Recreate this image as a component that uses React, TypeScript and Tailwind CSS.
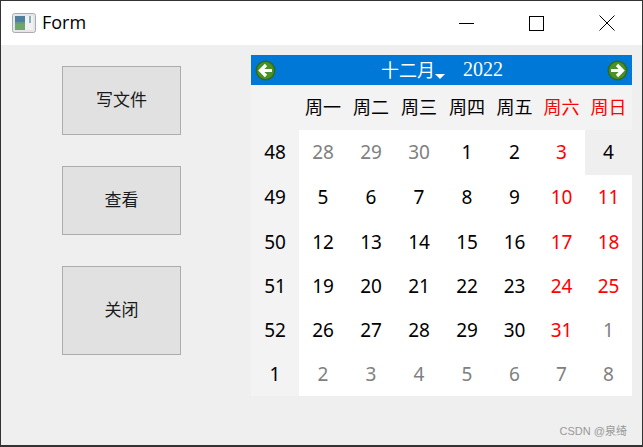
import React from 'react';

const cjk = '"Noto Sans CJK SC", sans-serif';

const weekDays = ['周一', '周二', '周三', '周四', '周五', '周六', '周日'];

// [week number, days]; muted days belong to the neighbouring month
const weeks: { no: number; days: number[] }[] = [
  { no: 48, days: [28, 29, 30, 1, 2, 3, 4] },
  { no: 49, days: [5, 6, 7, 8, 9, 10, 11] },
  { no: 50, days: [12, 13, 14, 15, 16, 17, 18] },
  { no: 51, days: [19, 20, 21, 22, 23, 24, 25] },
  { no: 52, days: [26, 27, 28, 29, 30, 31, 1] },
  { no: 1, days: [2, 3, 4, 5, 6, 7, 8] },
];

function WindowIcon() {
  return (
    <svg width="24" height="20" viewBox="0 0 24 20" className="shrink-0">
      <rect x="0.5" y="0.5" width="23" height="19" rx="2" fill="#e4e6e8" stroke="#a8acb0" />
      <rect x="3" y="3" width="18" height="14" fill="#f0f1f1" />
      <rect x="3" y="3" width="10" height="14" fill="#5f9c8c" />
      <rect x="3" y="3" width="10" height="6" fill="#4f7f9c" />
      <rect x="3" y="11" width="10" height="6" fill="#6fa56f" />
      <rect x="17" y="3" width="2" height="7" fill="#8fb0b8" />
    </svg>
  );
}

function NavArrow({ dir }: { dir: 'left' | 'right' }) {
  return (
    <svg width="21" height="21" viewBox="0 0 21 21">
      <circle cx="10.5" cy="10.5" r="10" fill="#2f6b1c" />
      <circle cx="10.5" cy="10.5" r="8.5" fill="#4b9128" />
      <g transform={dir === 'right' ? 'rotate(180 10.5 10.5)' : undefined}>
        <path d="M17 10.5H6M11 5L5.5 10.5L11 16" fill="none" stroke="#ffffff" strokeWidth="3.2" />
      </g>
    </svg>
  );
}

function SideButton({ label, className }: { label: string; className: string }) {
  return (
    <button
      className={`w-[119px] flex items-center justify-center border border-[#adadad] bg-[#e1e1e1] pb-[3px] text-[17px] text-[#1a1a1a] ${className}`}
      style={{ fontFamily: cjk }}
    >
      {label}
    </button>
  );
}

export default function App() {
  return (
    <div className="w-[643px] h-[447px] relative flex flex-col border border-[#333333] border-b-2 bg-[#efefef] overflow-hidden">
      {/* Title bar */}
      <div className="h-[44px] shrink-0 bg-white flex items-center pl-[11px]">
        <WindowIcon />
        <span className="ml-[6px] mb-[2px] text-[18px] text-black" style={{ fontFamily: '"Open Sans", sans-serif' }}>
          Form
        </span>
        <div className="ml-auto flex items-center">
          <div className="w-[46px] flex justify-center mr-[24px]">
            <div className="w-[15px] h-px bg-black" />
          </div>
          <div className="w-[46px] flex justify-center mr-[25px]">
            <div className="w-[15px] h-[15px] border border-black" />
          </div>
          <div className="w-[46px] flex justify-center mr-[12px]">
            <svg width="16" height="16" viewBox="0 0 16 16">
              <path d="M0.5 0.5L15.5 15.5M15.5 0.5L0.5 15.5" stroke="#000000" strokeWidth="1" fill="none" />
            </svg>
          </div>
        </div>
      </div>

      {/* Body */}
      <div className="flex flex-1 min-h-0">
        <div className="pl-[61px] pt-[21px] w-[250px] shrink-0 flex flex-col gap-[31px]">
          <SideButton label="写文件" className="h-[69px]" />
          <SideButton label="查看" className="h-[69px]" />
          <SideButton label="关闭" className="h-[89px]" />
        </div>

        <div className="mt-[10px] w-[381px] h-[341px] flex flex-col">
          {/* Navigation bar */}
          <div className="h-[30px] shrink-0 bg-[#0078d7] flex items-center justify-between px-[4px] text-white">
            <NavArrow dir="left" />
            <div className="flex items-center ml-[1px]">
              <span className="text-[18px] mb-[2px]" style={{ fontFamily: cjk }}>十二月</span>
              <svg width="10" height="5" viewBox="0 0 10 5" className="mt-[12px]">
                <path d="M0 0H10L5 5Z" fill="#ffffff" />
              </svg>
              <span className="ml-[18px] text-[20px] mb-[2px]" style={{ fontFamily: '"Liberation Serif", serif' }}>2022</span>
            </div>
            <NavArrow dir="right" />
          </div>

          {/* Week day header */}
          <div className="h-[45px] shrink-0 pb-[2px] bg-[#f3f3f3] grid grid-cols-[48px_48px_48px_48px_48px_47px_47px_47px] items-center">
            <div />
            {weekDays.map((d, i) => (
              <div
                key={d}
                className={`text-center text-[18px] ${i > 4 ? 'text-[#ff0000]' : 'text-black'}`}
                style={{ fontFamily: cjk }}
              >
                {d}
              </div>
            ))}
          </div>

          {/* Date rows */}
          <div
            className="flex-1 grid grid-cols-[48px_48px_48px_48px_48px_47px_47px_47px] grid-rows-[45px_45px_44px_44px_44px_44px] bg-white text-[19px]"
            style={{ fontFamily: '"Noto Sans", sans-serif' }}
          >
            {weeks.map((w, r) => (
              <React.Fragment key={w.no}>
                <div className="bg-[#f3f3f3] flex items-center justify-center text-black">{w.no}</div>
                {w.days.map((d, c) => {
                  const today = r === 0 && c === 6;
                  const muted = (r === 0 && c < 3) || (r === 4 && c === 6) || r === 5;
                  const red = c > 4 && !muted && !today;
                  return (
                    <div
                      key={c}
                      className={`flex items-center justify-center ${muted ? 'text-[#808080]' : red ? 'text-[#ff0000]' : 'text-black'} ${today ? 'bg-[#efefef]' : ''}`}
                    >
                      {d}
                    </div>
                  );
                })}
              </React.Fragment>
            ))}
          </div>
        </div>
      </div>

      {/* CSDN watermark over the window */}
      <div
        className="absolute right-[15px] bottom-[6px] text-[11px] text-[#999999]"
        style={{ fontFamily: '"Liberation Sans", "Noto Sans CJK SC", sans-serif' }}
      >
        CSDN @泉绮
      </div>
    </div>
  );
}
